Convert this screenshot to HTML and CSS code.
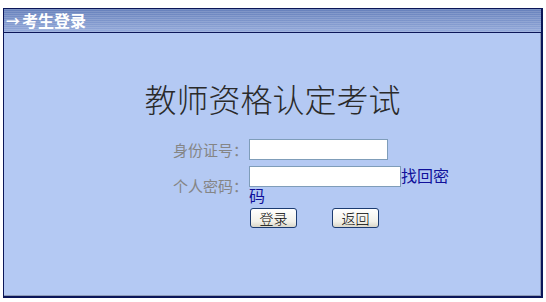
FILE: index.html
```html
<!DOCTYPE html>
<html lang="zh-CN">
<head>
<meta charset="utf-8">
<title>考生登录</title>
<link rel="stylesheet" href="styles.css">
</head>
<body>
<div class="panel">
  <div class="header"><span class="arrow">→</span>考生登录</div>
  <div class="content">
    <h1 class="title">教师资格认定考试</h1>
    <div class="form">
      <label class="label" for="sfz">身份证号：</label>
      <div class="field"><span class="box"><input id="sfz" class="input input-id" type="text"></span></div>
      <label class="label" for="pwd">个人密码：</label>
      <div class="field field-wrap"><span class="box"><input id="pwd" class="input input-pwd" type="password"></span><a class="link" href="#">找回密码</a></div>
      <div class="spacer"></div>
      <div class="buttons">
        <button class="btn" type="button">登录</button>
        <button class="btn" type="button">返回</button>
      </div>
    </div>
  </div>
</div>
</body>
</html>
```

FILE: styles.css
```css
html, body {
  margin: 0;
  padding: 0;
  background: #ffffff;
}

body {
  font-family: "Noto Sans CJK SC", "Noto Sans", sans-serif;
}

.panel {
  margin: 8px 0 0 3px;
  width: 540px;
  height: 290px;
  box-sizing: border-box;
  border: 1px solid #0b1658;
  border-right-width: 2px;
  border-bottom-width: 2px;
  display: flex;
  flex-direction: column;
}

.header {
  height: 23px;
  border-bottom: 1px solid #0b1658;
  background:
    repeating-linear-gradient(to bottom, rgba(255,255,255,0.14) 0 1px, rgba(0,0,0,0) 1px 2px),
    linear-gradient(to bottom, #6680bb, #93a9da);
  color: #ffffff;
  font-weight: bold;
  font-size: 16px;
  line-height: 23px;
  display: flex;
  align-items: center;
}

.arrow {
  display: inline-block;
  width: 18px;
  font-size: 14px;
  text-align: center;
}

.content {
  flex: 1;
  background: #b4c9f3;
  box-shadow: inset -1px -1px 0 #8e9bb8;
  display: flex;
  flex-direction: column;
}

.title {
  margin: 49px 0 0;
  font-size: 32px;
  line-height: 32px;
  font-weight: 300;
  color: #2a2a2a;
  text-align: center;
}

.form {
  margin: 25px 0 0 160px;
  display: grid;
  grid-template-columns: 85px 200px;
  row-gap: 6px;
  font-size: 15px;
}

.label {
  color: #858585;
  text-align: right;
  padding-right: 1px;
  align-self: center;
  line-height: 17px;
}

.field {
  line-height: 17px;
}

.box {
  display: inline-block;
  overflow: hidden;
  vertical-align: -5px;
  height: 21px;
}

.input {
  display: block;
  box-sizing: border-box;
  height: 21px;
  margin: 0;
  padding: 0 2px;
  border: 1px solid #7f9db9;
  background: #ffffff;
  font-size: 13px;
}

.input-id {
  width: 139px;
}

.input-pwd {
  width: 152px;
}

.link {
  color: #10109a;
  text-decoration: none;
  font-size: 16px;
}

.buttons {
  display: flex;
  gap: 35px;
  margin-top: -2px;
  padding-left: 1px;
}

.btn {
  width: 47px;
  height: 20px;
  margin: 0;
  padding: 0;
  border: 1px solid #1c3b70;
  border-radius: 3px;
  background: linear-gradient(to bottom, #ffffff, #f2f1ea 70%, #d9d6c8);
  font-family: "Noto Sans CJK SC", sans-serif;
  font-size: 14px;
  font-weight: 300;
  line-height: 18px;
  color: #000000;
}
```
